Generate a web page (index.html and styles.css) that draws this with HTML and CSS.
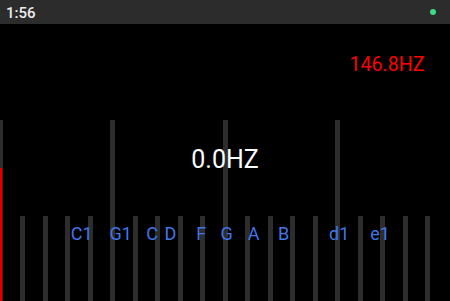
FILE: index.html
```html
<!DOCTYPE html>
<html>
<head>
<meta charset="utf-8">
<link rel="stylesheet" href="styles.css">
</head>
<body>
<div class="status">
  <span class="time">1:56</span>
  <span class="dot"></span>
</div>
<div class="main">
  <div class="freq">146.8HZ</div>
  <div class="scale">
    <div class="tick tall"></div><div class="tick"></div><div class="tick"></div><div class="tick"></div><div class="tick"></div>
    <div class="tick tall"></div><div class="tick"></div><div class="tick"></div><div class="tick"></div><div class="tick"></div>
    <div class="tick tall"></div><div class="tick"></div><div class="tick"></div><div class="tick"></div><div class="tick"></div>
    <div class="tick tall"></div><div class="tick"></div><div class="tick"></div><div class="tick"></div><div class="tick"></div>
  </div>
  <div class="reading">0.0HZ</div>
  <div class="needle"></div>
  <span class="note" style="left:81.7px">C1</span>
  <span class="note" style="left:120.7px">G1</span>
  <span class="note" style="left:152px">C</span>
  <span class="note" style="left:170.5px">D</span>
  <span class="note" style="left:201.3px">F</span>
  <span class="note" style="left:226.7px">G</span>
  <span class="note" style="left:253.5px">A</span>
  <span class="note" style="left:283.7px">B</span>
  <span class="note" style="left:339.2px">d1</span>
  <span class="note" style="left:380px">e1</span>
</div>
</body>
</html>
```
FILE: styles.css
```css
html, body {
  margin: 0;
  padding: 0;
  background: #000;
  width: 450px;
  height: 301px;
  overflow: hidden;
  font-family: Roboto, "Noto Sans", sans-serif;
}
.status {
  height: 24px;
  background: #2c2c2c;
  display: flex;
  align-items: center;
  justify-content: space-between;
  padding: 0 14px 0 6px;
}
.time {
  color: #ececec;
  font-size: 15px;
  font-weight: 500;
  line-height: 24px;
  padding-top: 1px;
}
.dot {
  width: 6px;
  height: 6px;
  border-radius: 50%;
  background: #3ddc84;
}
.main {
  position: relative;
  height: 277px;
  display: flex;
  flex-direction: column;
}
.freq {
  color: #ff0000;
  font-size: 19.6px;
  line-height: 20px;
  text-align: right;
  padding: 31px 25.5px 0 0;
}
.scale {
  margin-top: auto;
  margin-left: -2.5px;
  display: flex;
  align-items: flex-end;
  gap: 17.5px;
}
.tick {
  flex: none;
  width: 5px;
  height: 85px;
  background: #2d2d2d;
}
.tick.tall {
  height: 181px;
}
.reading {
  position: absolute;
  left: 0;
  right: 0;
  top: 123px;
  text-align: center;
  color: #fff;
  font-size: 25px;
  line-height: 25px;
}
.needle {
  position: absolute;
  left: 0;
  top: 144px;
  bottom: 0;
  width: 1.5px;
  background: #e00000;
}
.note {
  position: absolute;
  top: 201px;
  transform: translateX(-50%);
  color: #4076e8;
  font-size: 18px;
  line-height: 18px;
  white-space: nowrap;
}
```
